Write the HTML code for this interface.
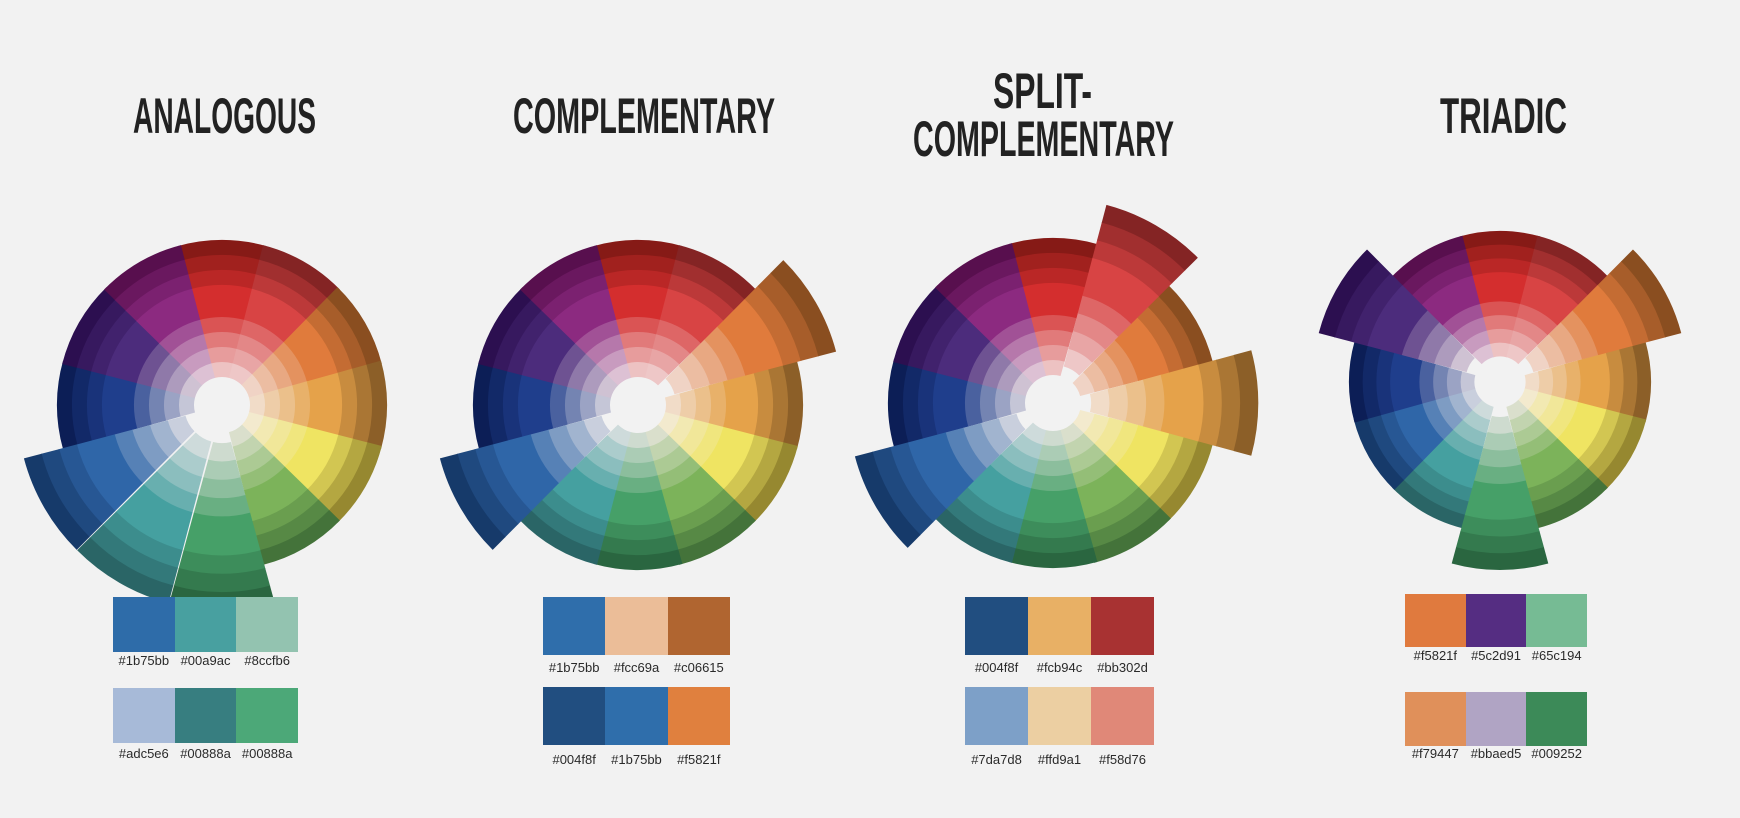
<!DOCTYPE html>
<html><head><meta charset="utf-8">
<style>
html,body{margin:0;padding:0;background:#f2f2f2;}
body{width:1740px;height:818px;position:relative;overflow:hidden;font-family:"Liberation Sans",sans-serif;}
.t{position:absolute;font-weight:bold;font-size:50px;line-height:50px;color:#222;white-space:nowrap;transform-origin:0 0;}
.sw{position:absolute;display:flex;}
.sw div{flex:1;}
.lb{position:absolute;display:flex;font-size:13px;color:#2a2a2a;}
.lb span{flex:1;text-align:center;}
svg{position:absolute;left:0;top:0;}
</style></head><body>
<svg id="s" width="1740" height="818"></svg>

<div class="t" data-c="224" data-w="183" data-y="100">ANALOGOUS</div>
<div class="t" data-c="644" data-w="262" data-y="100">COMPLEMENTARY</div>
<div class="t" data-c="1042" data-w="99" data-y="75">SPLIT-</div>
<div class="t" data-c="1043" data-w="261" data-y="123">COMPLEMENTARY</div>
<div class="t" data-c="1503" data-w="127" data-y="100">TRIADIC</div>

<div class="sw" style="left:113px;top:597px;width:185px;height:55px"><div style="background:#2e6ca9"></div><div style="background:#48a0a0"></div><div style="background:#93c3b0"></div></div>
<div class="lb" style="left:113px;top:653px;width:185px"><span>#1b75bb</span><span>#00a9ac</span><span>#8ccfb6</span></div>
<div class="sw" style="left:113px;top:688px;width:185px;height:55px"><div style="background:#a7bad8"></div><div style="background:#377e80"></div><div style="background:#4ca878"></div></div>
<div class="lb" style="left:113px;top:746px;width:185px"><span>#adc5e6</span><span>#00888a</span><span>#00888a</span></div>

<div class="sw" style="left:543px;top:597px;width:187px;height:58px"><div style="background:#2f6eab"></div><div style="background:#ebbd98"></div><div style="background:#b06530"></div></div>
<div class="lb" style="left:543px;top:660px;width:187px"><span>#1b75bb</span><span>#fcc69a</span><span>#c06615</span></div>
<div class="sw" style="left:543px;top:687px;width:187px;height:58px"><div style="background:#214e80"></div><div style="background:#2f6eab"></div><div style="background:#e0803e"></div></div>
<div class="lb" style="left:543px;top:752px;width:187px"><span>#004f8f</span><span>#1b75bb</span><span>#f5821f</span></div>

<div class="sw" style="left:965px;top:597px;width:189px;height:58px"><div style="background:#214e80"></div><div style="background:#e8b065"></div><div style="background:#a83232"></div></div>
<div class="lb" style="left:965px;top:660px;width:189px"><span>#004f8f</span><span>#fcb94c</span><span>#bb302d</span></div>
<div class="sw" style="left:965px;top:687px;width:189px;height:58px"><div style="background:#7da0c8"></div><div style="background:#eccfa2"></div><div style="background:#e08878"></div></div>
<div class="lb" style="left:965px;top:752px;width:189px"><span>#7da7d8</span><span>#ffd9a1</span><span>#f58d76</span></div>

<div class="sw" style="left:1405px;top:594px;width:182px;height:53px"><div style="background:#e07a3e"></div><div style="background:#552d82"></div><div style="background:#76bb94"></div></div>
<div class="lb" style="left:1405px;top:648px;width:182px"><span>#f5821f</span><span>#5c2d91</span><span>#65c194</span></div>
<div class="sw" style="left:1405px;top:692px;width:182px;height:54px"><div style="background:#e0905a"></div><div style="background:#b0a4c4"></div><div style="background:#3c8a58"></div></div>
<div class="lb" style="left:1405px;top:746px;width:182px"><span>#f79447</span><span>#bbaed5</span><span>#009252</span></div>

<script>
(function(){
document.querySelectorAll('.t').forEach(function(e){
  var w=e.getBoundingClientRect().width, tw=+e.dataset.w, k=tw/w;
  e.style.left=(+e.dataset.c - tw/2)+'px';
  e.style.top=(+e.dataset.y - 9)+'px';
  e.style.transform='scaleX('+k+')';
});
var H=[
 [-90,'#d42e2e','#861a16'],[-60,'#d84444','#842424'],[-30,'#e07b3c','#8a4e20'],
 [0,'#e5a24a','#8c5f28'],[30,'#efe462','#968830'],[60,'#7cb35a','#44733a'],
 [90,'#46a068','#2a6640'],[120,'#45a0a0','#2a6566'],[150,'#2f66a8','#163a6a'],
 [180,'#1f3e8c','#0c1e56'],[210,'#4c2c7c','#2c0f50'],[240,'#8c2a80','#580f4e']];
function hx(c){return [parseInt(c.substr(1,2),16),parseInt(c.substr(3,2),16),parseInt(c.substr(5,2),16)];}
function mix(a,b,f){a=hx(a);b=hx(b);return 'rgb('+a.map(function(v,i){return Math.round(v+(b[i]-v)*f);}).join(',')+')';}
var rings=[[28,43.6],[43,58.6],[58,73.6],[73,88.6],[88,120.6],[120,135.6],[135,150.6],[150,165]];
function col(h,i){
  if(i<4) return mix(h[1],'#f4ecec',[0.78,0.58,0.4,0.2][i]);
  if(i==4) return h[1];
  return mix(h[1],h[2],[0.33,0.66,1][i-5]);
}
var svg=document.getElementById('s'), out='';
function seg(cx,cy,R,h,ext){
  var s=R/165, k=ext?1.22:1, d=ext?4*s:0, hw=ext?15.2:15.6;
  var a0=(h[0]-hw)*Math.PI/180, a1=(h[0]+hw)*Math.PI/180, am=h[0]*Math.PI/180;
  var ox=cx+d*Math.cos(am), oy=cy+d*Math.sin(am);
  rings.forEach(function(r,i){
    var r0=r[0]*s*k, r1=r[1]*s*k;
    var p=function(rr,a){return (ox+rr*Math.cos(a)).toFixed(2)+' '+(oy+rr*Math.sin(a)).toFixed(2);};
    out+='<path fill="'+col(h,i)+'" d="M'+p(r0,a0)+' L'+p(r1,a0)+' A'+r1+' '+r1+' 0 0 1 '+p(r1,a1)+' L'+p(r0,a1)+' A'+r0+' '+r0+' 0 0 0 '+p(r0,a0)+'Z"/>';
  });
}
function wheel(cx,cy,R,ex){
  H.forEach(function(h){ if(ex.indexOf(h[0])<0) seg(cx,cy,R,h,false); });
  H.forEach(function(h){ if(ex.indexOf(h[0])>=0) seg(cx,cy,R,h,true); });
}
wheel(222,405,165,[90,120,150]);
wheel(638,405,165,[-30,150]);
wheel(1053,403,165,[-60,0,150]);
wheel(1500,382,151,[-30,90,210]);
svg.innerHTML=out;
})();
</script>
</body></html>
